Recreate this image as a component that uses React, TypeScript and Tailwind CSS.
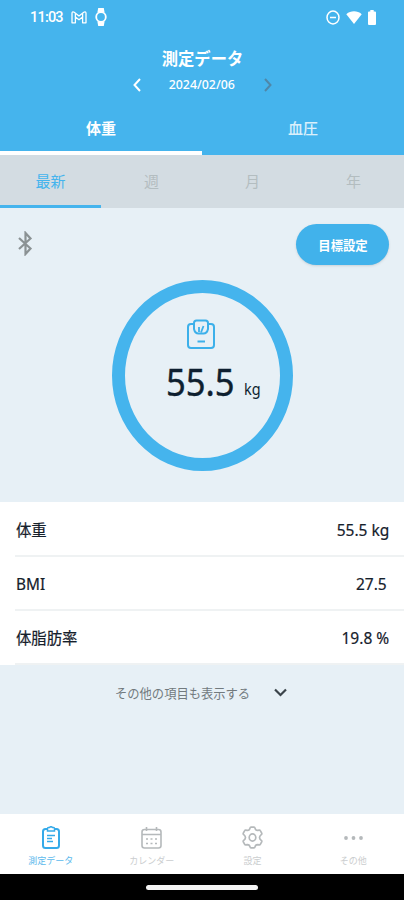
import React from "react";

const cjk = "font-['Noto_Sans_CJK_JP',sans-serif]";
const latin = "font-['Noto_Sans','Noto_Sans_CJK_JP',sans-serif]";

const rows = [
  { label: "体重", value: "55.5 kg", pad: "pr-[15px]" },
  { label: "BMI", value: "27.5", pad: "pr-[17px]" },
  { label: "体脂肪率", value: "19.8 %", pad: "pr-[15px]" },
];

const periods = ["最新", "週", "月", "年"];

function StatusBar() {
  return (
    <div className="flex h-9 items-center pl-[30px] pr-[28px] text-white">
      <span className="w-[33px] whitespace-nowrap font-['Roboto',sans-serif] text-[14.5px] font-medium leading-none tracking-[-0.8px]">
        11:03
      </span>
      <svg className="ml-2 h-[13px] w-4 -translate-y-px" viewBox="0 0 16 13" fill="none" stroke="currentColor" strokeWidth="1.3">
        <path d="M1 11.8V2.2C1 .7 2.3.6 3.2 1.3L8 5l4.8-3.7c.9-.7 2.2-.6 2.2.9v9.6h-3.4V6L8 8.8 4.4 6v5.8z" strokeLinejoin="round" />
        <path d="M4.4 2.5V6M11.6 2.5V6" />
      </svg>
      <svg className="ml-2 h-[18px] w-3 -translate-y-px" viewBox="0 0 12 18" fill="none">
        <path d="M3.2 0h5.6l.8 4.500H2.4zM2.400 13.500h7.200l-.8 4.500H3.200z" fill="currentColor" />
        <circle cx="6" cy="9" r="4.8" stroke="currentColor" strokeWidth="1.8" />
      </svg>
      <div className="ml-auto flex -translate-y-px items-center">
        <svg className="h-[15px] w-[14px]" viewBox="0 0 14 15" fill="none" stroke="currentColor" strokeWidth="1.5">
          <ellipse cx="7" cy="7.5" rx="6" ry="6.4" />
          <path d="M4 7.5h6" />
        </svg>
        <svg className="ml-[6px] h-[13px] w-4" viewBox="0 0 16 13" fill="currentColor">
          <path d="M.3 3.2C4.8-.6 11.2-.6 15.7 3.2L8 13z" />
        </svg>
        <svg className="ml-[6px] h-[15px] w-2" viewBox="0 0 8 15" fill="currentColor">
          <path d="M2.300 0h3.400v1.500H7q1 0 1 1V14q0 1-1 1H1q-1 0-1-1V2.500q0-1 1-1h1.300z" />
        </svg>
      </div>
    </div>
  );
}

function Header() {
  return (
    <header className="h-[155px] shrink-0 bg-[#45b4ed] text-white">
      <StatusBar />
      <h1 className={`${cjk} mt-[10px] h-6 text-center text-[17px] font-bold leading-6`}>
        <span className="inline-block scale-x-[0.96]">測定データ</span>
      </h1>
      <div className="flex h-[30px] items-center justify-center">
        <svg className="h-[14px] w-2" viewBox="0 0 8 14" fill="none" stroke="currentColor" strokeWidth="2">
          <path d="M7 1 1.5 7 7 13" />
        </svg>
        <span className={`${latin} w-[123px] text-center text-[13px] font-medium leading-none`}>
          <span className="inline-block -translate-y-px scale-x-[0.95]">2024/02/06</span>
        </span>
        <svg className="h-[14px] w-2 text-[#4f87a8]" viewBox="0 0 8 14" fill="none" stroke="currentColor" strokeWidth="2">
          <path d="m1 1 5.500 6L1 13" />
        </svg>
      </div>
      <div className={`${cjk} grid grid-cols-2 text-center text-[15px] leading-[56px]`}>
        <div className="h-[55px] border-b-4 border-white font-bold">体重</div>
        <div className="h-[55px] font-medium text-white/80">血圧</div>
      </div>
    </header>
  );
}

function Periods() {
  return (
    <div className={`${cjk} grid h-[53px] shrink-0 grid-cols-4 bg-[#d3dce2] text-center text-[15px] leading-[51px]`}>
      {periods.map((p, i) => (
        <div
          key={p}
          className={i === 0 ? "h-[53px] border-b-[3px] border-[#45b4ed] text-[#45b4ed]" : "text-[#b3bdc0]"}
        >
          {p}
        </div>
      ))}
    </div>
  );
}

function Gauge() {
  return (
    <div className="mx-auto mt-[15px] flex h-[191px] w-[181px] flex-col items-center rounded-[50%] border-[13px] border-[#45b4ed]">
      <svg className="mt-[26px] h-[30px] w-7 -translate-x-px text-[#3cb0ea]" viewBox="0 0 28 30" fill="none" stroke="currentColor" strokeWidth="2">
        <path d="M7 5H4Q1 5 1 8v18q0 3 3 3h20q3 0 3-3V8q0-3-3-3h-3" />
        <path d="M9.500 1.500h9Q21 1.500 21 4v6q-1 4.500-4.500 4.500h-5Q8 14.500 7 10V4q0-2.500 2.500-2.500z" />
        <path d="M12 8v5M16.500 7 14 13.500" strokeWidth="1.800" />
        <path d="M10.500 22.500H18" />
      </svg>
      <div className={`${latin} relative mt-[7px] h-[54px] w-[110px] text-[#0e1f30]`}>
        <span className="absolute left-[19px] -top-px origin-left scale-x-[0.91] text-[38px] leading-[52px] [-webkit-text-stroke:0.4px_currentColor]">55.5</span>
        <span className="absolute left-[97px] top-[21px] origin-left scale-x-[0.9] text-[16px] leading-6">kg</span>
      </div>
    </div>
  );
}

function Records() {
  return (
    <div className={`${latin} h-[163px] shrink-0 bg-white pt-px text-[#15202b]`}>
      {rows.map((row) => (
        <div key={row.label} className={`ml-[15px] flex h-[54px] items-center justify-between border-b-2 border-[#eff2f3] pl-px pt-px text-[16px] ${row.pad}`}>
          <span className="origin-left scale-x-[0.96] [-webkit-text-stroke:0.2px_currentColor]">{row.label}</span>
          <span className="origin-right scale-x-[0.97] [-webkit-text-stroke:0.2px_currentColor]">{row.value}</span>
        </div>
      ))}
    </div>
  );
}

function ClipboardIcon() {
  return (
    <svg className="h-[23px] w-[18px]" viewBox="0 0 18 23" fill="none" stroke="currentColor" strokeWidth="2">
      <path d="M5.500 3h-2Q1 3 1 5.500v14Q1 22 3.500 22h11q2.500 0 2.500-2.500v-14Q17 3 14.500 3h-2" />
      <path d="M5.500 2.500q0-1 1-1h1q1.500-1.500 3 0h1q1 0 1 1V5h-7z" strokeWidth="1.500" />
      <path d="M5 9.500h8M5 12.500h5M5 15.500h6" strokeWidth="1.400" />
    </svg>
  );
}

function CalendarIcon() {
  return (
    <svg className="h-[22px] w-[21px]" viewBox="0 0 21 22" fill="none" stroke="currentColor" strokeWidth="1.600">
      <rect x="1" y="2.500" width="19" height="18.500" rx="2.500" />
      <path d="M1 7.500h19M5.500 0v4M15.500 0v4" />
      <path d="M5 12h2M9.500 12h2M14 12h2M5 16.500h2M9.500 16.500h2M14 16.500h2" />
    </svg>
  );
}

function GearIcon() {
  return (
    <svg className="h-[23px] w-[21px]" viewBox="0 0 21 23" fill="none" stroke="currentColor" strokeWidth="1.700" strokeLinejoin="round">
      <path d="M9 1.200h3q.8 0 1 .9.500 2.400 2.600 2.300l1.700-.3q.7-.1 1 .5l1.400 2.600q.3.600-.2 1.100-2 1.700-2 3.200t2 3.200q.5.500.2 1.100l-1.400 2.600q-.3.600-1 .5l-1.700-.3q-2.100-.1-2.600 2.300-.2.900-1 .9H9q-.8 0-1-.9-.5-2.400-2.600-2.300l-1.700.3q-.7.100-1-.5l-1.400-2.600q-.3-.6.200-1.100 2-1.700 2-3.200t-2-3.200Q1 7.800 1.300 7.200l1.400-2.600q.3-.6 1-.5l1.700.3Q7.500 4.500 8 2.100q.2-.9 1-.9z" />
      <ellipse cx="10.500" cy="11.500" rx="3.300" ry="3.600" />
    </svg>
  );
}

function MoreIcon() {
  return (
    <svg className="h-[22px] w-[19px]" viewBox="0 0 19 22" fill="currentColor">
      <circle cx="2" cy="11" r="1.900" />
      <circle cx="9.500" cy="11" r="1.900" />
      <circle cx="17" cy="11" r="1.900" />
    </svg>
  );
}

const navItems = [
  { label: "測定データ", icon: <ClipboardIcon />, active: true },
  { label: "カレンダー", icon: <CalendarIcon /> },
  { label: "設定", icon: <GearIcon /> },
  { label: "その他", icon: <MoreIcon /> },
];

export default function App() {
  return (
    <div className="flex h-[900px] w-[404px] flex-col overflow-hidden bg-[#e7f0f6]">
      <Header />
      <Periods />
      <div className="flex h-[57px] shrink-0 items-start justify-between pl-[18px] pr-[15px] pt-4">
        <svg className="mt-[7px] h-[25px] w-[15px] text-[#8b9294]" viewBox="0 0 15 25" fill="none" stroke="currentColor" strokeWidth="2.200">
          <path d="m1 7 11.500 10.500L7.500 23V2l5 5.500L1 18" />
        </svg>
        <button className={`${cjk} h-[41px] w-[93px] rounded-full bg-[#41b2eb] text-[13px] font-bold text-white shadow`}>
          <span className="inline-block translate-x-px scale-x-[0.95]">目標設定</span>
        </button>
      </div>
      <div className="h-[237px] shrink-0">
        <Gauge />
      </div>
      <Records />
      <div className={`${cjk} flex h-[149px] shrink-0 items-start pl-[115px] pt-4 text-[13px] leading-6 text-[#727a7e]`}>
        <span className="w-[159px] origin-left scale-x-[0.945] whitespace-nowrap">その他の項目も表示する</span>
        <svg className="mt-[7px] h-[9px] w-[13px] text-[#3b444a]" viewBox="0 0 13 9" fill="none" stroke="currentColor" strokeWidth="2.200">
          <path d="m1 1.500 5.500 5.500L12 1.500" />
        </svg>
      </div>
      <nav className={`${cjk} grid h-[60px] shrink-0 grid-cols-4 bg-white`}>
        {navItems.map((item) => (
          <div
            key={item.label}
            className={`flex flex-col items-center pt-3 ${item.active ? "text-[#35aae9]" : "text-[#b5b9bb]"}`}
          >
            <span className="flex h-[23px] items-center">{item.icon}</span>
            <span className={`mt-[3px] text-[9.5px] leading-4 ${item.active ? "opacity-80" : "opacity-70"}`}>
              <span className="inline-block scale-x-[0.95]">{item.label}</span>
            </span>
          </div>
        ))}
      </nav>
      <div className="flex h-[26px] shrink-0 justify-center bg-black pt-[11px]">
        <div className="h-[5px] w-[112px] rounded-full bg-[#f3f3f3]" />
      </div>
    </div>
  );
}
